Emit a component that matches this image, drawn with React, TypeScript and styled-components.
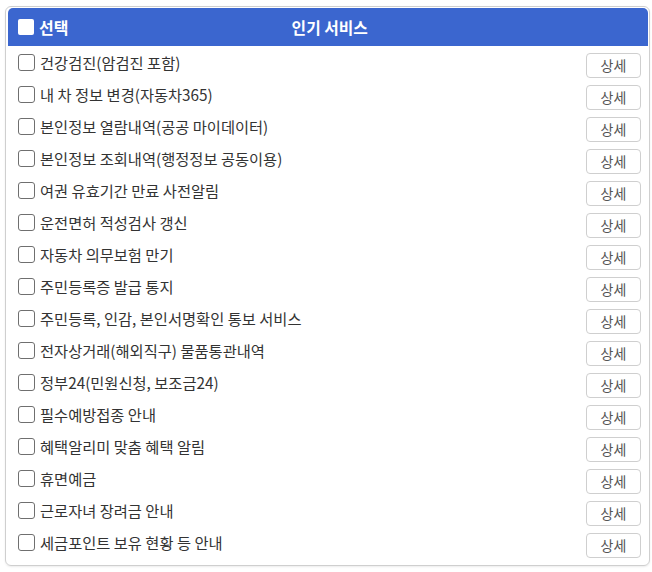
import React from "react";
import styled, { createGlobalStyle } from "styled-components";

const Global = createGlobalStyle`
  html, body { margin: 0; padding: 0; background: #fff; }
  body { font-family: "Noto Sans CJK KR", "Noto Sans", sans-serif; }
`;

const Page = styled.div`
  padding: 6px 2px 4px 5px;
`;

const Card = styled.div`
  border: 1px solid #cfcfcf;
  border-radius: 6px;
  padding: 1px 1px 7px 2px;
  box-shadow: 0 1px 2px rgba(0,0,0,0.08);
`;

const Header = styled.div`
  height: 38px;
  background: #3b66cf;
  border-radius: 5px 5px 0 0;
  display: flex;
  align-items: center;
  padding-left: 10px;
  color: #fff;
`;

const HeadCheck = styled.span`
  width: 16px;
  height: 16px;
  background: #fff;
  border-radius: 2px;
  margin-right: 5px;
`;

const HeadLabel = styled.span`
  font-size: 16px;
  font-weight: 700;
`;

const HeadTitle = styled.span`
  flex: 1;
  text-align: center;
  font-size: 15.8px;
  font-weight: 700;
  margin-right: 57px;
`;

const Row = styled.div`
  height: 32px;
  display: flex;
  align-items: center;
  padding-left: 10px;
  padding-right: 7px;
`;

const Box = styled.span`
  width: 15px;
  height: 15px;
  border: 1px solid #6f6f6f;
  border-radius: 3px;
  margin-right: 5px;
  flex: none;
`;

const Label = styled.span`
  flex: 1;
  font-size: 15.3px;
  color: #333;
`;

const Button = styled.button`
  width: 55px;
  height: 25px;
  border: 1px solid #cfcfcf;
  border-radius: 4px;
  background: #fff;
  color: #555;
  font-family: "Noto Sans CJK KR", sans-serif;
  font-size: 14px;
  padding: 0;
  margin-top: 6px;
`;

const items = [
  "건강검진(암검진 포함)",
  "내 차 정보 변경(자동차365)",
  "본인정보 열람내역(공공 마이데이터)",
  "본인정보 조회내역(행정정보 공동이용)",
  "여권 유효기간 만료 사전알림",
  "운전면허 적성검사 갱신",
  "자동차 의무보험 만기",
  "주민등록증 발급 통지",
  "주민등록, 인감, 본인서명확인 통보 서비스",
  "전자상거래(해외직구) 물품통관내역",
  "정부24(민원신청, 보조금24)",
  "필수예방접종 안내",
  "혜택알리미 맞춤 혜택 알림",
  "휴면예금",
  "근로자녀 장려금 안내",
  "세금포인트 보유 현황 등 안내",
];

export default function App() {
  return (
    <>
      <Global />
      <Page>
        <Card>
          <Header>
            <HeadCheck />
            <HeadLabel>선택</HeadLabel>
            <HeadTitle>인기 서비스</HeadTitle>
          </Header>
          {items.map((t) => (
            <Row key={t}>
              <Box />
              <Label>{t}</Label>
              <Button>상세</Button>
            </Row>
          ))}
        </Card>
      </Page>
    </>
  );
}
